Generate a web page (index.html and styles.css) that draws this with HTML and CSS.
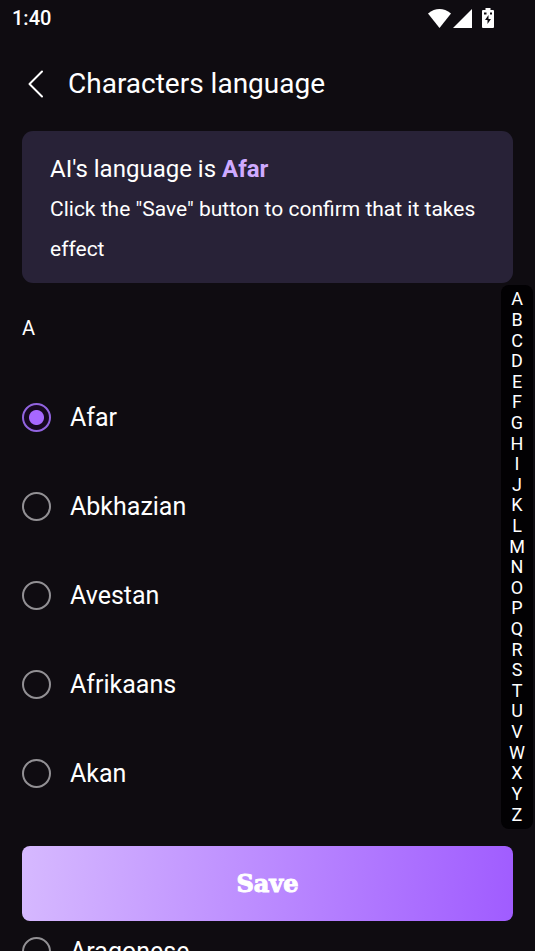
FILE: index.html
```html
<!DOCTYPE html>
<html lang="en">
<head>
<meta charset="utf-8">
<meta name="viewport" content="width=device-width, initial-scale=1">
<title>Characters language</title>
<link rel="stylesheet" href="styles.css">
</head>
<body>
<div class="screen">
  <div class="status">
    <span class="time">1:40</span>
    <div class="status-icons">
      <svg width="23" height="19" viewBox="0 0 23 19" aria-hidden="true"><path d="M0 4.4Q11.500-4.200 23 4.400L11.500 19Z" fill="#fff"/></svg>
      <svg width="19" height="19" viewBox="0 0 19 19" aria-hidden="true"><path d="M19 0V19H0Z" fill="#fff"/></svg>
      <svg class="battery" width="12" height="20" viewBox="0 0 12 20" aria-hidden="true"><path d="M3.500 0H8.500V2H11Q12 2 12 3V19Q12 20 11 20H1Q0 20 0 19V3Q0 2 1 2H3.500Z" fill="#fff"/><path d="M6.500 7L3 12H5.500V16L9 11H6.500ZM2 4.500H4.500V6.500H2ZM8 4.500H10V6.500H8Z" fill="#0f0c11"/></svg>
    </div>
  </div>
  <header class="header">
    <button class="back" type="button" aria-label="Back">
      <svg width="16" height="28" viewBox="0 0 16 28" aria-hidden="true"><path d="M14 1.500L1.500 14L14 26.500" fill="none" stroke="#fff" stroke-width="2" stroke-linecap="round" stroke-linejoin="round"/></svg>
    </button>
    <h1>Characters language</h1>
  </header>
  <section class="card">
    <p class="current">AI's language is <strong>Afar</strong></p>
    <p class="hint">Click the "Save" button to confirm that it takes effect</p>
  </section>
  <main class="content">
    <form class="languages" id="languages">
      <h2>A</h2>
      <label class="row"><input type="radio" name="language" checked><span>Afar</span></label>
      <label class="row"><input type="radio" name="language"><span>Abkhazian</span></label>
      <label class="row"><input type="radio" name="language"><span>Avestan</span></label>
      <label class="row"><input type="radio" name="language"><span>Afrikaans</span></label>
      <label class="row"><input type="radio" name="language"><span>Akan</span></label>
      <label class="row"><input type="radio" name="language"><span>Amharic</span></label>
      <label class="row"><input type="radio" name="language"><span>Aragonese</span></label>
    </form>
    <nav class="index" aria-label="Alphabet">
      <a href="#A">A</a><a href="#B">B</a><a href="#C">C</a><a href="#D">D</a><a href="#E">E</a><a href="#F">F</a><a href="#G">G</a><a href="#H">H</a><a href="#I">I</a><a href="#J">J</a><a href="#K">K</a><a href="#L">L</a><a href="#M">M</a><a href="#N">N</a><a href="#O">O</a><a href="#P">P</a><a href="#Q">Q</a><a href="#R">R</a><a href="#S">S</a><a href="#T">T</a><a href="#U">U</a><a href="#V">V</a><a href="#W">W</a><a href="#X">X</a><a href="#Y">Y</a><a href="#Z">Z</a>
    </nav>
    <button class="save" type="submit" form="languages">Save</button>
  </main>
</div>
</body>
</html>
```
FILE: styles.css
```css
* {
  box-sizing: border-box;
}

body {
  margin: 0;
  background: #0f0c11;
  color: #fff;
  font-family: Roboto, "Liberation Sans", sans-serif;
}

h1,
h2,
p {
  margin: 0;
  font-weight: 400;
}

.screen {
  display: flex;
  flex-direction: column;
  height: 100vh;
  overflow: hidden;
}

.status {
  display: flex;
  flex: none;
  justify-content: space-between;
  align-items: center;
  height: 36px;
  padding: 0 41px 0 12px;
}

.time {
  font-size: 20px;
  font-weight: 500;
}

.status-icons {
  display: flex;
  align-items: center;
  gap: 2px;
}

.battery {
  margin-left: 8px;
}

.header {
  display: flex;
  flex: none;
  align-items: center;
  gap: 24px;
  height: 95px;
  padding: 0 28px;
}

.back {
  display: flex;
  padding: 0;
  border: 0;
  background: none;
}

h1 {
  font-size: 28px;
  line-height: 36px;
}

.card {
  flex: none;
  margin: 0 22px;
  padding: 18px 28px 14px;
  border-radius: 11px;
  background: #282237;
}

.current {
  font-size: 24px;
  line-height: 40px;
}

.current strong {
  color: #cfaaff;
  font-weight: 700;
}

.hint {
  font-size: 21px;
  line-height: 40px;
}

.content {
  position: relative;
  flex: 1;
  min-height: 0;
}

.languages {
  height: 100%;
  padding: 0 22px;
  overflow: hidden;
}

h2 {
  font-size: 20px;
  line-height: 90px;
}

.row {
  display: flex;
  align-items: center;
  gap: 19px;
  height: 89px;
  font-size: 25px;
}

.row input {
  flex: none;
  width: 29px;
  height: 29px;
  margin: 0;
  appearance: none;
  border: 2px solid #929094;
  border-radius: 50%;
}

.row input:checked {
  border-color: #9264e0;
  background: radial-gradient(circle, #a768ff 7px, #170922 8px);
}

.index {
  position: absolute;
  top: 2px;
  right: 2px;
  bottom: 122px;
  display: flex;
  flex-direction: column;
  width: 32px;
  padding: 4px 0;
  border-radius: 8px;
  background: #020103;
}

.index a {
  display: flex;
  flex: 1;
  justify-content: center;
  align-items: center;
  min-height: 0;
  color: #fff;
  font-size: 18px;
  line-height: 20px;
  text-decoration: none;
}

.save {
  position: absolute;
  right: 22px;
  bottom: 30px;
  left: 22px;
  height: 75px;
  padding: 0;
  border: 0;
  border-radius: 8px;
  background: linear-gradient(95deg, #d6b9ff, #a05cff);
  color: #fff;
  font-family: "DejaVu Serif", serif;
  font-size: 24px;
  font-weight: 700;
  -webkit-text-stroke: 1px #fff;
}
```
